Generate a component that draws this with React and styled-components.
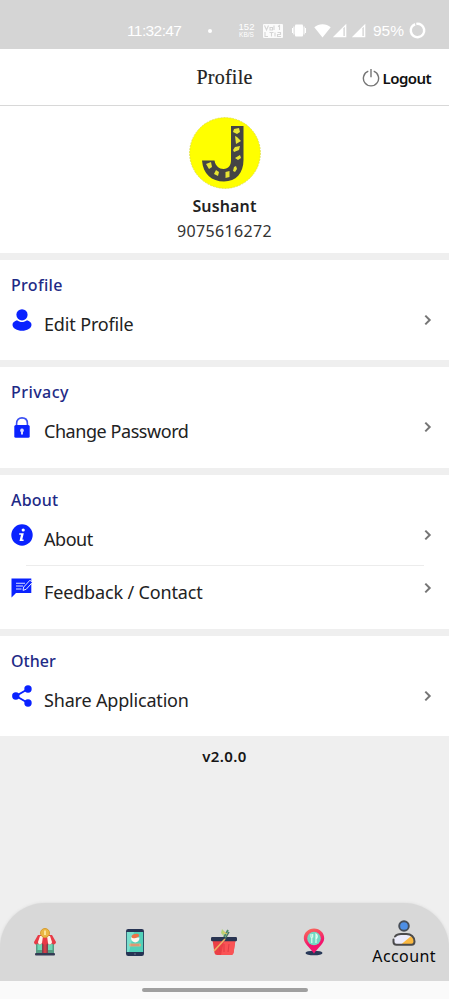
import React from "react";
import styled, { createGlobalStyle } from "styled-components";

const sections = [
  {
    title: "Profile",
    titleSpacing: "0.3px",
    rows: [{ label: "Edit Profile", icon: <UserIcon />, spacing: "-0.15px" }],
  },
  {
    title: "Privacy",
    titleSpacing: "0.45px",
    rows: [{ label: "Change Password", icon: <LockIcon />, spacing: "-0.44px" }],
  },
  {
    title: "About",
    titleSpacing: "0.2px",
    rows: [
      { label: "About", icon: <InfoIcon />, spacing: "-0.45px" },
      { label: "Feedback / Contact", icon: <FeedbackIcon />, spacing: "-0.15px" },
    ],
  },
  {
    title: "Other",
    titleSpacing: "0px",
    rows: [{ label: "Share Application", icon: <ShareIcon />, spacing: "-0.18px" }],
  },
];

function App() {
  return (
    <Screen>
      <GlobalStyle />
      <StatusBar />
      <Header>
        <Title>Profile</Title>
        <Logout>
          <PowerIcon />
          Logout
        </Logout>
      </Header>
      <UserCard>
        <Avatar />
        <UserName>Sushant</UserName>
        <UserPhone>9075616272</UserPhone>
      </UserCard>
      {sections.map((section) => (
        <Section key={section.title}>
          <SectionTitle $spacing={section.titleSpacing}>{section.title}</SectionTitle>
          {section.rows.map((row) => (
            <Row key={row.label}>
              <RowIcon>{row.icon}</RowIcon>
              <RowLabel $spacing={row.spacing}>{row.label}</RowLabel>
              <RowArrow>
                <svg width="8" height="12" viewBox="0 0 8 12" fill="none">
                  <path d="M1.3 1.6L5.7 6L1.3 10.4" stroke="#757575" strokeWidth="2" />
                </svg>
              </RowArrow>
            </Row>
          ))}
        </Section>
      ))}
      <Version>v2.0.0</Version>
      <TabBar>
        <Tab><ShopIcon /></Tab>
        <Tab><PhoneIcon /></Tab>
        <Tab><BasketIcon /></Tab>
        <Tab><PinIcon /></Tab>
        <Tab $active>
          <AccountIcon />
          <TabLabel>Account</TabLabel>
        </Tab>
      </TabBar>
      <GestureArea>
        <GesturePill />
      </GestureArea>
    </Screen>
  );
}

export default App;

function StatusBar() {
  return (
    <StatusWrap>
      <Clock>11:32:47</Clock>
      <Dot />
      <NetSpeed>
        <b>152</b>
        <small>KB/S</small>
      </NetSpeed>
      <VoLte>
        <svg width="20" height="14" viewBox="0 0 20 14">
          <rect width="20" height="14" rx="1" fill="#fbfbfb" />
          <g stroke="#d5d5d5" strokeWidth="1.1" fill="none">
            <path d="M1.5 1.5L3.5 6L5.5 1.5M7 3.5h2.5v2.5H7zM11 1.5v4.5M2 8v4.5h3M6.5 8.5h4M8.5 8.5v4M12 8.5v4M15 2.5l1.5-1v4.5M14.5 8.5h3v2h-3v2h3.5" />
          </g>
        </svg>
      </VoLte>
      <Vibrate>
        <svg width="14" height="13" viewBox="0 0 14 13" fill="#fff">
          <rect x="3" y="0.5" width="8" height="12" rx="1" />
          <path d="M0 4h1v5H0zM1.4 2.5h1v8h-1zM11.6 2.5h1v8h-1zM13 4h1v5h-1z" />
        </svg>
      </Vibrate>
      <svg width="17" height="14" viewBox="0 0 17 14" fill="#fff">
        <path d="M0.3 3.2C4.8-.8 12.2-.8 16.7 3.2L8.5 13.5Z" />
      </svg>
      <Signal />
      <Signal />
      <Battery>95%</Battery>
      <svg width="17" height="17" viewBox="0 0 17 17" fill="none">
        <circle cx="8.5" cy="8.5" r="6.7" stroke="#fff" strokeWidth="2.5" strokeDasharray="40.5 1.6" transform="rotate(-100 8.5 8.5)" />
      </svg>
    </StatusWrap>
  );
}

function Signal() {
  return (
    <SignalSvg width="15" height="15" viewBox="0 0 15 15">
      <path d="M14.3 0.8V14.3H0.8Z" fill="#fff" />
      <path d="M11.4 5.2L12.8 3.8V13h-1.4Z" fill="#d5d5d5" />
    </SignalSvg>
  );
}

function PowerIcon() {
  return (
    <svg width="18" height="19" viewBox="0 0 18 19" fill="none" stroke="#757575" strokeWidth="1.4">
      <path d="M6.3 2.2A7.6 7.6 0 1 0 11.7 2.2M9 0V8.2" />
    </svg>
  );
}

function Avatar() {
  return (
    <svg width="72" height="72" viewBox="0 0 72 72">
      <circle cx="36" cy="36" r="35.4" fill="#ff0" stroke="#d8d836" strokeWidth="0.7" strokeDasharray="2 1" />
      <path
        d="M42 9H54.5V43C54.5 56 47 64.5 35 64.5C22.5 64.5 14 57 13 43.5H25.5C26.5 49 30 52 34.5 52C39.5 52 42 48.5 42 43Z"
        fill="#454545"
      />
      <g fill="#e8e532">
        <path d="M45 12l5-1 1 4-3 2-4-2z" />
        <path d="M46 19l2 1 4 4-5 3z" />
        <path d="M44 33l2-3 5-1-1 4-5 2z" />
        <path d="M46 41l5-3 1 3-3 2z" />
        <path d="M17 47l5-2 1 5-3 2z" />
        <path d="M27 53l3 2-1 4-4-2z" />
        <path d="M36.5 55l4-1v6l-4 1z" />
        <path d="M45 50l2-1 1 3-2 3-2-1z" />
      </g>
    </svg>
  );
}

function UserIcon() {
  return (
    <svg width="20" height="22" viewBox="0 0 20 22" fill="#0a22ff">
      <circle cx="10" cy="5.8" r="5.6" />
      <path d="M0.5 15.7C0.5 13.3 2.6 12.2 5 11.3C8 13.7 12 13.7 15 11.3C17.4 12.2 19.5 13.3 19.5 15.7C19.5 19.3 15 21.7 10 21.7C5 21.7 0.5 19.3 0.5 15.7Z" />
    </svg>
  );
}

function LockIcon() {
  return (
    <svg width="16" height="21" viewBox="0 0 16 21">
      <path d="M2.6 9V6.5C2.6 3 4.7 0.9 8 0.9S13.4 3 13.4 6.5V9" fill="none" stroke="#3c50f2" strokeWidth="1.6" />
      <rect x="0.3" y="8" width="15.4" height="12.8" rx="1.5" fill="#0a22ff" />
      <path d="M8 11.6a1.9 1.9 0 0 1 1 3.5V17.5H7V15.1a1.9 1.9 0 0 1 1-3.5Z" fill="#d9dcff" />
    </svg>
  );
}

function InfoIcon() {
  return (
    <svg width="22" height="22" viewBox="0 0 22 22">
      <circle cx="11" cy="11" r="10.7" fill="#0a22ff" />
      <circle cx="12.2" cy="6" r="1.6" fill="#fff" />
      <path d="M8.2 9.2H12.8L11.3 15.5H12.6V17H8.5L10 10.7H8.2Z" fill="#fff" />
    </svg>
  );
}

function FeedbackIcon() {
  return (
    <svg width="22" height="20" viewBox="0 0 22 20">
      <path d="M0.5 0.5H20.3V15H5L0.5 19.5Z" fill="#0a22ff" />
      <path d="M5 5.2H14M5 8H12M5 11H10.5" stroke="#dfe3ff" strokeWidth="1.1" />
      <path d="M12 12.3L12.7 9L19 2.2L21.3 4.5L15.2 11.3Z" fill="#0a22ff" stroke="#fff" strokeWidth="0.9" />
    </svg>
  );
}

function ShareIcon() {
  return (
    <svg width="20" height="22" viewBox="0 0 20 22" fill="#0a22ff">
      <path d="M16 4L4 11L16 18" fill="none" stroke="#0a22ff" strokeWidth="1.9" />
      <circle cx="16" cy="4" r="3.7" />
      <circle cx="3.8" cy="11" r="3.7" />
      <circle cx="16" cy="18" r="3.7" />
    </svg>
  );
}

function ShopIcon() {
  return (
    <svg width="22" height="28" viewBox="0 0 22 28">
      <rect x="2" y="14" width="18" height="11" fill="#579b83" />
      <rect x="3.5" y="16" width="4.5" height="6" fill="#6ed8b5" />
      <rect x="14" y="16" width="4.5" height="6" fill="#6ed8b5" />
      <rect x="8" y="15" width="6" height="10" fill="#81424d" />
      <rect x="9.5" y="16" width="3" height="9" fill="#d43d48" />
      <path d="M4 7H18L22 14C22 17 18 17 18 15C17 17 14 17 14 15C13 17 9 17 8 15C7 17 4 17 4 15C3 17 0 17 0 14Z" fill="#e83a46" />
      <path d="M6 8H9L8 15C7 17 4 17 4 14ZM13 8H16L18 14C18 17 14 17 14 15Z" fill="#fff0e9" />
      <circle cx="11" cy="5" r="4.5" fill="#eab744" stroke="#d89c31" />
      <path d="M11 2.5V7" stroke="#fff0b6" strokeWidth="1.5" />
      <rect x="1" y="25" width="20" height="2.5" rx="1" fill="#343b55" />
    </svg>
  );
}

function PhoneIcon() {
  return (
    <svg width="18" height="27" viewBox="0 0 18 27">
      <rect width="18" height="27" rx="2.2" fill="#263454" />
      <path d="M0.8 3H17.2V23H0.8Z" fill="#52d1b9" />
      <path d="M0.8 3H8L3 23H0.8Z" fill="#79dfcd" />
      <path d="M5 8.5H13.5C13.5 15 5 15 5 8.5Z" fill="#fff8ef" />
      <ellipse cx="9.3" cy="7" rx="3.8" ry="2" fill="#ee7247" transform="rotate(-15 9.3 7)" />
      <rect x="3.2" y="14.5" width="11.8" height="3" rx="1" fill="#d9ad83" />
      <path d="M5 16H13" stroke="#e8775e" strokeWidth="0.8" />
      <circle cx="9" cy="25" r="0.9" fill="#58637d" />
    </svg>
  );
}

function BasketIcon() {
  return (
    <svg width="26" height="28" viewBox="0 0 26 28">
      <path d="M11 1L14 4L12.5 8L10 5Z" fill="#b4d47b" />
      <path d="M13 9L17 2" stroke="#4d8a68" strokeWidth="1.8" />
      <path d="M12 4L16 6" stroke="#e4cb5a" strokeWidth="1.2" />
      <path d="M1.5 12H24.5L22.5 25Q22 27 20 27H6Q4 27 3.5 25Z" fill="#eb3f46" />
      <path d="M13 13H24.3L22.5 25Q22 27 20 27H10Z" fill="#fa5355" />
      <path d="M8 16L9 24M13 16V24M18 16L17 24" stroke="#e13c45" />
      <rect y="9" width="26" height="4.3" rx="1.2" fill="#293451" />
      <path d="M3 23L14 11" fill="none" stroke="#eeb067" strokeWidth="1.7" />
      <path d="M14 11L18 4" stroke="#46765f" strokeWidth="1.5" />
    </svg>
  );
}

function PinIcon() {
  return (
    <svg width="22" height="28" viewBox="0 0 22 28">
      <defs>
        <linearGradient id="pin" x1="0" y1="0" x2="0.3" y2="1">
          <stop offset="0" stopColor="#fa7559" />
          <stop offset="0.7" stopColor="#f3146d" />
        </linearGradient>
      </defs>
      <ellipse cx="11" cy="25" rx="8.5" ry="2.3" fill="#293958" />
      <path d="M11 0.5C5 0.5 0.8 5 0.8 10.3C0.8 16 6.500 19 11 25.5C15.5 19 21.2 16 21.2 10.3C21.2 5 17 0.5 11 0.5Z" fill="url(#pin)" />
      <circle cx="11" cy="10.5" r="6.8" fill="#72d9c3" />
      <path d="M8 6V9.5M9.7 6V9.5M8.8 9V15M13 15V6C15 7 14.5 10 13 11" fill="none" stroke="#e4fff3" strokeWidth="1.1" />
    </svg>
  );
}

function AccountIcon() {
  return (
    <svg width="24" height="26" viewBox="0 0 24 26">
      <circle cx="12" cy="6" r="4.8" fill="#4e8fe5" stroke="#474e58" strokeWidth="1.9" />
      <path d="M2 24V20C3 16 7 14.5 12 14.5H15C20 14.5 22 17.5 22 21Q22 24.5 19 24.5H4Q2 24.5 2 24Z" fill="#ececfb" />
      <path d="M19.5 15.8C22 18 22 20 22 21Q22 24.5 19 24.5H9Z" fill="#fbb940" />
      <path d="M1.5 19.5V22Q1.5 24.7 4.5 24.7H19.5Q22.5 24.7 22.5 21.5C22.5 17 19 14 14.5 14H9Q5 14 3 16.5" fill="none" stroke="#4b4b4c" strokeWidth="2" strokeLinecap="round" />
    </svg>
  );
}

const GlobalStyle = createGlobalStyle`
  * {
    box-sizing: border-box;
  }
  body {
    margin: 0;
    background: #efefef;
    font-family: "Noto Sans", "Open Sans", sans-serif;
  }
  svg {
    display: block;
    flex-shrink: 0;
  }
`;

const Screen = styled.div`
  width: 449px;
  height: 999px;
  display: flex;
  flex-direction: column;
  overflow: hidden;
  background-color: #efefef;
`;

const StatusWrap = styled.div`
  height: 49px;
  flex-shrink: 0;
  display: flex;
  align-items: center;
  padding: 12px 23px 0 127px;
  background-color: #d5d5d5;
  color: #fff;
  font-family: "Liberation Sans", sans-serif;
`;

const Clock = styled.span`
  width: 81px;
  font-size: 15.5px;
  letter-spacing: -0.6px;
`;

const Dot = styled.span`
  width: 4px;
  height: 4px;
  border-radius: 50%;
  background: #fff;
`;

const NetSpeed = styled.div`
  width: 17px;
  margin-left: 26px;
  display: flex;
  flex-direction: column;
  align-items: center;
  b {
    font-size: 9.5px;
    font-weight: 400;
    line-height: 8px;
  }
  small {
    font-size: 6.5px;
    line-height: 7px;
  }
`;

const VoLte = styled.div`
  margin-left: 8px;
`;

const Vibrate = styled.div`
  margin: 0 8px 0 9px;
`;

const SignalSvg = styled.svg`
  margin-left: 1px;
  margin-right: 3px;
`;

const Battery = styled.span`
  flex: 1;
  margin-left: 4px;
  font-size: 15.5px;
`;

const Header = styled.header`
  height: 57px;
  flex-shrink: 0;
  display: grid;
  grid-template-columns: 1fr auto 1fr;
  align-items: center;
  padding: 0 17px;
  background-color: #fff;
  border-bottom: 1px solid #d8d8d8;
`;

const Title = styled.h1`
  grid-column: 2;
  margin: 0;
  color: #222;
  font-family: "Liberation Serif", serif;
  font-size: 20px;
  font-weight: 400;
  letter-spacing: 0.25px;
  -webkit-text-stroke: 0.2px #222;
`;

const Logout = styled.div`
  display: flex;
  align-items: center;
  justify-content: flex-end;
  gap: 3px;
  padding: 2px 1px 0 0;
  color: #111;
  font-size: 15px;
  font-weight: 600;
  letter-spacing: -0.55px;
`;

const UserCard = styled.div`
  height: 147px;
  flex-shrink: 0;
  display: flex;
  flex-direction: column;
  align-items: center;
  padding-top: 10.5px;
  background-color: #fff;
`;

const UserName = styled.div`
  margin-top: 5.5px;
  color: #222;
  font-size: 16px;
  font-weight: 600;
  line-height: 24px;
  letter-spacing: 0.15px;
`;

const UserPhone = styled.div`
  color: #333;
  font-size: 16px;
  line-height: 27px;
  letter-spacing: 0.35px;
`;

const Section = styled.section`
  flex-shrink: 0;
  margin-top: 7px;
  padding-bottom: 9.3px;
  background-color: #fff;
`;

const SectionTitle = styled.h2`
  height: 37px;
  margin: 0;
  padding: 13px 0 0 11px;
  color: #1e2a86;
  font-size: 16px;
  font-weight: 500;
  line-height: 24px;
  letter-spacing: ${(props) => props.$spacing};
`;

const Row = styled.div`
  height: 54px;
  display: flex;
  align-items: center;
  padding: 0 17px 0 11px;
  & + & {
    height: 55px;
    margin-top: -1px;
    background: linear-gradient(#ececec, #ececec) 26px 0 / 398px 1px no-repeat;
  }
`;

const RowIcon = styled.div`
  width: 22px;
  margin-bottom: 8px;
  display: flex;
  justify-content: center;
`;

const RowLabel = styled.span`
  flex: 1;
  margin-left: 11px;
  color: #222;
  font-size: 18px;
  letter-spacing: ${(props) => props.$spacing};
`;

const RowArrow = styled.div`
  margin-bottom: 8px;
`;

const Version = styled.div`
  margin-top: 7.5px;
  color: #161616;
  font-size: 15px;
  font-weight: 600;
  line-height: 24px;
  letter-spacing: 0.4px;
  text-align: center;
`;

const TabBar = styled.nav`
  height: 78px;
  flex-shrink: 0;
  margin-top: auto;
  display: grid;
  grid-template-columns: repeat(5, 1fr);
  border-radius: 45px 45px 0 0;
  background-color: #d8d8d8;
  box-shadow: 0 0 3px #d8d8d8;
`;

const Tab = styled.div`
  display: flex;
  flex-direction: column;
  align-items: center;
  justify-content: ${(props) => (props.$active ? "flex-start" : "center")};
  padding-top: ${(props) => (props.$active ? "17px" : "0")};
`;

const TabLabel = styled.span`
  color: #080808;
  font-size: 16px;
  line-height: 20px;
  letter-spacing: 0.4px;
`;

const GestureArea = styled.div`
  height: 18px;
  flex-shrink: 0;
  display: flex;
  justify-content: center;
  padding-top: 7px;
  background-color: #fafafa;
`;

const GesturePill = styled.div`
  width: 166px;
  height: 4px;
  border-radius: 2px;
  background: #a0a0a0;
`;
